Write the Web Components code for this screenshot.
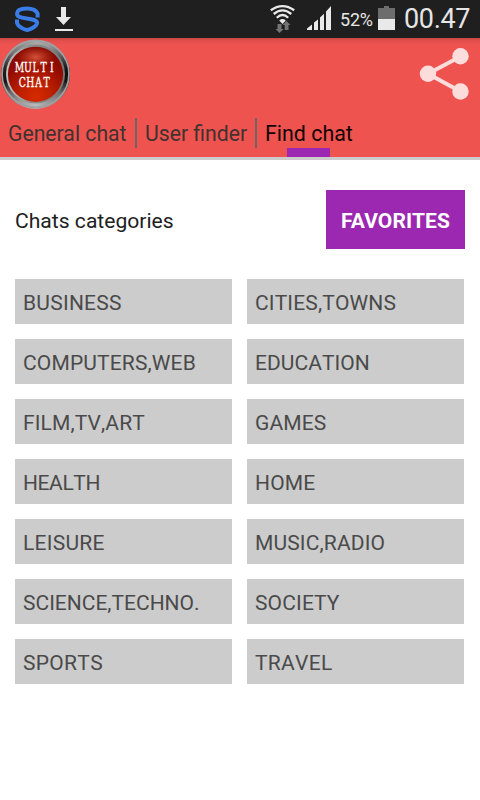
<!DOCTYPE html>
<html lang="en"><head><meta charset="utf-8"><title>Multi Chat</title>
<style>html,body{margin:0;background:#fff}body{width:480px;height:800px;overflow:hidden;font-family:Roboto,"Liberation Sans",sans-serif}</style></head>
<body><multi-chat-app></multi-chat-app>
<script>
const define=(name,html,setup)=>customElements.define(name,class extends HTMLElement{
  connectedCallback(){
    if(this.shadowRoot)return;
    const t=document.createElement('template');t.innerHTML=html;
    this.attachShadow({mode:'open'}).append(t.content.cloneNode(true));
    if(setup)setup(this);
  }
});

define('status-bar',`<style>
:host{display:flex;height:38px;background:#1f1f1f;color:#e6e6e6;align-items:flex-start}
svg{display:block;flex:none}.space{flex:1}
.pct{font-size:18px;line-height:38px;width:34px;margin-left:8px;margin-top:1px;white-space:nowrap;letter-spacing:-.2px}
.time{font-size:27px;line-height:38px;width:76px;white-space:nowrap;letter-spacing:-.35px}
</style>
<svg width="80" height="38" viewBox="0 0 80 38"><g fill="none" stroke="#3b7de8" stroke-width="4" stroke-linejoin="round">
<path d="M37.600 17.500V13.500C36 9.800 32 8.400 27 8.400C20.500 8.400 17 10.500 17 13.500C17 16 19 17 22 17.600L31 19.300C35 20.200 37.500 21 37 23.500C36 27 30.500 29.400 27.300 30C23.800 29.400 18 26.500 17 23V19.500"/></g>
<path d="M61 7h5v10h5L63.500 25L56 17h5ZM55 29h18v2H55Z" fill="#e9e9e9"/></svg>
<span class="space"></span>
<svg width="62" height="38" viewBox="270 0 62 38"><g fill="none" stroke="#e9e9e9" stroke-width="2.300"><path d="M270.800 10.200Q282.500 2 294.200 10.200M273.700 14Q282.500 6.700 291.300 14M276.800 17.800Q282.500 12.200 288.200 17.800"/></g><path d="M279.200 20.500Q282.500 17.600 285.800 20.500L282.500 24Z" fill="#e9e9e9"/>
<path d="M277.500 24h4v5h2.200L279.500 33L275.500 29h2ZM284.700 30v-5h-2.200L286.500 21L290.500 25h-2v5Z" fill="#747474"/>
<path d="M307 30V28.500L312 24.500V30ZM314 30V22.500L318 19.500V30ZM320 30V17.500L324 13.800V30ZM326 30V11.500L331 6V30Z" fill="#e9e9e9"/></svg>
<span class="pct">52%</span>
<svg width="30" height="38" viewBox="374 0 30 38"><path d="M384 6h5v2h6v11h-17V8h6Z" fill="#6d6d6d"/><path d="M378 19h17v11h-17Z" fill="#e9e9e9"/></svg>
<span class="time">00.47</span>`);

define('chat-logo',`<style>:host{display:block;width:72px;height:72px}svg{display:block}text{font-family:"DejaVu Serif",serif;font-size:12.5px;fill:#fff;stroke:#fff;stroke-width:.35px;text-anchor:middle}</style>
<svg width="72" height="72" viewBox="0 38 72 72"><defs>
<radialGradient id="red" cx=".5" cy=".9" r=".95"><stop offset="0" stop-color="#d72a00"/><stop offset=".3" stop-color="#bd2000"/><stop offset=".65" stop-color="#940c00"/><stop offset="1" stop-color="#7d0800"/></radialGradient>
<radialGradient id="shine"><stop offset="0" stop-color="#ff8260" stop-opacity=".6"/><stop offset="1" stop-color="#f65e3d" stop-opacity="0"/></radialGradient>
<linearGradient id="rim" x2="1"><stop stop-color="#c5c5c5"/><stop offset=".4" stop-color="#8d8d8d"/><stop offset="1" stop-color="#777"/></linearGradient></defs>
<foreignObject x="1" y="39" width="70" height="71"><div xmlns="http://www.w3.org/1999/xhtml" style="margin-top:.5px;width:69px;height:69px;border-radius:50%;background:conic-gradient(#aaa 0deg,#999 25deg,#666 50deg,#111 80deg,#111 100deg,#777 130deg,#999 155deg,#bbb 180deg,#999 210deg,#666 235deg,#111 258deg,#222 280deg,#777 315deg,#aaa 360deg)"></div></foreignObject>
<circle cx="35.500" cy="74" r="33.500" fill="none" stroke="#a0a0a0" stroke-width="1.800"/>
<circle cx="35.500" cy="74" r="29.500" fill="url(#rim)"/><circle cx="35.500" cy="74.300" r="27.600" fill="url(#red)"/>
<ellipse cx="35.500" cy="57" rx="19" ry="11" fill="url(#shine)"/>
<g transform="scale(.74 1)"><text y="72.500" x="26.4 37.6 48.2 59 69.900">MULTI</text><text y="87" x="30 41 52 63">CHAT</text></g></svg>`);

define('share-icon',`<style>:host{display:block;width:80px;height:72px}svg{display:block}</style>
<svg width="80" height="72" viewBox="400 38 80 72" fill="#fddcdc"><path d="M460.500 56.500L428 73.700L460.500 91.500" fill="none" stroke="#fddcdc" stroke-width="4"/><circle cx="460.500" cy="56.200" r="8.200"/><circle cx="428" cy="73.700" r="8.200"/><circle cx="460.500" cy="91.500" r="8.200"/></svg>`);

define('chat-tab',`<style>
:host{display:block;position:relative;box-sizing:border-box;height:39px;padding-left:8px;color:#41322f;font-size:21.2px;line-height:32px;white-space:nowrap}
:host([divided])::after{content:"";position:absolute;right:0;top:0;width:2px;height:30px;background:#6d6464}
:host([active]){color:#130505}:host([active])::before{content:"";position:absolute;left:30px;top:30px;width:43px;height:9px;background:#9c27b0}
</style><slot></slot>`);

define('app-header',`<style>
:host{display:block;box-sizing:border-box;height:122px;background:linear-gradient(#c74744 0,#df4e4b 2px,#ee5350 7px,#ef5350 100%);border-bottom:3px solid #ccc}
.top{display:flex;justify-content:space-between;height:72px}
nav{display:grid;grid-template-columns:137px 120px 1fr;margin-top:8px}
</style><div class="top"><chat-logo></chat-logo><share-icon></share-icon></div>
<nav><chat-tab divided>General chat</chat-tab><chat-tab divided>User finder</chat-tab><chat-tab active style="font-size:21.4px">Find chat</chat-tab></nav>`);

define('category-tile',`<style>:host{display:block;box-sizing:border-box;height:45px;background:#ccc;color:#4a4a4a;padding-left:8px;font-size:21px;line-height:48px;white-space:nowrap;font-kerning:none;letter-spacing:var(--tracking,.15px)}</style><slot></slot>`);

define('multi-chat-app',`<style>
:host{display:block;height:800px;background:#fff}
.heading{display:flex;justify-content:space-between;height:59px;padding:0 15px;margin-top:30px;line-height:62px}
.title{font-size:21.100px;color:#212121}
.favorites{width:139px;background:#9c27b0;color:#fff;text-align:center;font-size:21px;font-weight:700;letter-spacing:.1px}
.grid{display:grid;grid-template-columns:217px 217px;gap:15px;padding:30px 15px}
</style><status-bar></status-bar><app-header></app-header>
<div class="heading"><span class="title">Chats categories</span><span class="favorites">FAVORITES</span></div><div class="grid"></div>`,host=>{
  const grid=host.shadowRoot.querySelector('.grid');
  const tracking={'BUSINESS':'.25px','HEALTH':'-.4px','SCIENCE,TECHNO.':'0px','TRAVEL':'.3px','SPORTS':'.3px','LEISURE':'.25px','EDUCATION':'.05px'};
  for(const name of ['BUSINESS','CITIES,TOWNS','COMPUTERS,WEB','EDUCATION','FILM,TV,ART','GAMES','HEALTH','HOME','LEISURE','MUSIC,RADIO','SCIENCE,TECHNO.','SOCIETY','SPORTS','TRAVEL']){
    const tile=document.createElement('category-tile');tile.textContent=name;
    if(tracking[name])tile.style.setProperty('--tracking',tracking[name]);
    grid.append(tile);
  }
});
</script></body></html>
